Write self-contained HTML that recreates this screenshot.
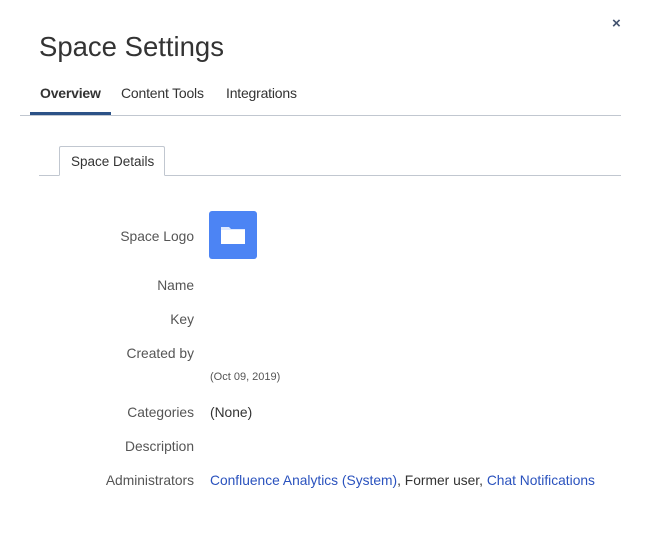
<!DOCTYPE html><html><head><style>
body{margin:0;width:646px;height:550px;background:#fff;font-family:"Liberation Sans",sans-serif;position:relative;overflow:hidden}
.a{position:absolute;white-space:nowrap}
.l{position:absolute;right:452px;font-size:13.8px;color:#555;white-space:nowrap}
.v{position:absolute;left:210px;font-size:13.8px;color:#333;white-space:nowrap}
a{color:#2a52be;text-decoration:none}
</style></head><body>
<div class="a" style="left:612px;top:15px;font-size:15px;font-weight:bold;color:#42526e">×</div>
<div class="a" style="left:39px;top:31px;font-size:27.5px;color:#333">Space Settings</div>
<div class="a" style="left:40px;top:85px;font-size:14px;font-weight:bold;color:#333;letter-spacing:-0.2px">Overview</div>
<div class="a" style="left:121px;top:85px;font-size:14px;color:#333;letter-spacing:-0.2px">Content Tools</div>
<div class="a" style="left:226px;top:85px;font-size:14px;color:#333;letter-spacing:-0.2px">Integrations</div>
<div class="a" style="left:30px;top:112px;width:81px;height:3px;background:#2c5287"></div>
<div class="a" style="left:20px;top:115px;width:601px;height:1px;background:#c1c7d0"></div>
<div class="a" style="left:39px;top:175px;width:582px;height:1px;background:#c1c7d0"></div>
<div class="a" style="left:59px;top:146px;width:106px;height:30px;border:1px solid #c1c7d0;border-bottom:1px solid #fff;border-radius:2px 2px 0 0;background:#fff;box-sizing:border-box"></div>
<div class="a" style="left:71px;top:154px;font-size:13.5px;color:#333">Space Details</div>
<div class="l" style="top:229px">Space Logo</div>
<div class="a" style="left:209px;top:211px;width:48px;height:48px;background:#4c84f4;border-radius:3px">
<svg width="48" height="48" viewBox="0 0 48 48"><path d="M12 16h8l2 2h14v15H12z" fill="#dfe9ff"/><rect x="12" y="19" width="24" height="14" fill="#fff"/></svg></div>
<div class="l" style="top:278px">Name</div>
<div class="l" style="top:312px">Key</div>
<div class="l" style="top:346px">Created by</div>
<div class="v" style="top:371px;font-size:11px;color:#555">(Oct 09, 2019)</div>
<div class="l" style="top:405px">Categories</div>
<div class="v" style="top:405px">(None)</div>
<div class="l" style="top:439px">Description</div>
<div class="l" style="top:473px">Administrators</div>
<div class="v" style="top:473px"><a>Confluence Analytics (System)</a>, Former user, <a>Chat Notifications</a></div>
</body></html>
